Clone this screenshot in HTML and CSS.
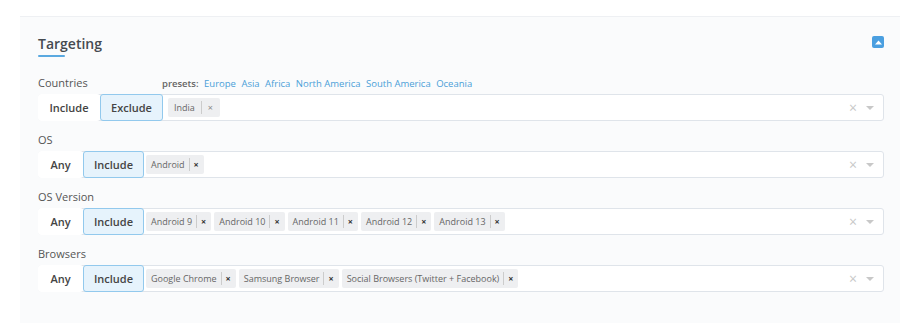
FILE: index.html
```html
<!DOCTYPE html>
<html lang="en">
<head>
  <meta charset="UTF-8" />
  <title>Targeting</title>
  <link rel="stylesheet" href="styles.css">
</head>
<body>
  <div class="panel">
    <div class="panel-head">
      <h2 class="title">Targeting</h2>
      <button class="collapse" title="Collapse">
        <svg width="7" height="5" viewBox="0 0 7 5"><path d="M0 4.5 L3.5 0.5 L7 4.5 Z" fill="#fff"/></svg>
      </button>
    </div>

    <div class="field">
      <div class="label-row">
        <span class="label label-wide">Countries</span>
        <span class="presets">presets:
          <a>Europe</a> <a>Asia</a> <a>Africa</a> <a>North America</a> <a>South America</a> <a>Oceania</a>
        </span>
      </div>
      <div class="select">
        <button class="mode w61">Include</button>
        <button class="mode w63 active">Exclude</button>
        <div class="tags">
          <span class="tag light">India<i>×</i></span>
        </div>
        <span class="clear">×</span>
        <span class="caret"></span>
      </div>
    </div>

    <div class="field">
      <div class="label">OS</div>
      <div class="select">
        <button class="mode w44">Any</button>
        <button class="mode w61 active">Include</button>
        <div class="tags">
          <span class="tag">Android<i>×</i></span>
        </div>
        <span class="clear">×</span>
        <span class="caret"></span>
      </div>
    </div>

    <div class="field">
      <div class="label">OS Version</div>
      <div class="select">
        <button class="mode w44">Any</button>
        <button class="mode w61 active">Include</button>
        <div class="tags">
          <span class="tag">Android 9<i>×</i></span>
          <span class="tag">Android 10<i>×</i></span>
          <span class="tag">Android 11<i>×</i></span>
          <span class="tag">Android 12<i>×</i></span>
          <span class="tag">Android 13<i>×</i></span>
        </div>
        <span class="clear">×</span>
        <span class="caret"></span>
      </div>
    </div>

    <div class="field">
      <div class="label">Browsers</div>
      <div class="select">
        <button class="mode w44">Any</button>
        <button class="mode w61 active">Include</button>
        <div class="tags">
          <span class="tag">Google Chrome<i>×</i></span>
          <span class="tag">Samsung Browser<i>×</i></span>
          <span class="tag">Social Browsers (Twitter + Facebook)<i>×</i></span>
        </div>
        <span class="clear">×</span>
        <span class="caret"></span>
      </div>
    </div>
  </div>
</body>
</html>
```

FILE: styles.css
```css
body {
  margin: 0;
  background: #ffffff;
  font-family: 'Open Sans', 'Liberation Sans', sans-serif;
  color: #555;
}

.panel {
  margin: 16px 0 0 20px;
  background: #fafbfc;
  border-top: 1px solid #eef0f3;
  padding: 17px 16px 30px 18px;
}

.panel-head {
  display: flex;
  align-items: center;
  justify-content: space-between;
  margin-bottom: 21px;
}

.title {
  position: relative;
  margin: 0;
  font-size: 14px;
  font-weight: 600;
  line-height: 20px;
  color: #454a50;
}

.title::after {
  content: '';
  position: absolute;
  left: 0;
  bottom: -3px;
  width: 27px;
  height: 2px;
  background: #5aa9e0;
  border-radius: 1px;
}

.collapse {
  display: flex;
  align-items: center;
  justify-content: center;
  width: 12px;
  height: 12px;
  padding: 0;
  border: none;
  border-radius: 2px;
  background: #4a9fe0;
  margin-top: -4px;
}

.field {
  margin-bottom: 11px;
}

.label-row {
  display: flex;
  align-items: baseline;
}

.label {
  font-size: 11px;
  line-height: 16px;
  color: #555;
  margin-bottom: 3px;
}

.label-wide {
  width: 124px;
}

.presets {
  font-size: 9.5px;
  font-weight: 600;
  color: #666;
}

.presets a {
  color: #4a9fd8;
  font-weight: 400;
  margin-left: 3px;
}

.select {
  display: flex;
  align-items: center;
  height: 27px;
  box-sizing: border-box;
  border: 1px solid #dfe4ea;
  border-radius: 3px;
  background: #fff;
}

.mode {
  align-self: stretch;
  box-sizing: border-box;
  margin: -1px 0;
  padding: 0;
  text-align: center;
  font-family: inherit;
  font-size: 11px;
  font-weight: 600;
  color: #444;
  background: #fff;
  border: 1px solid transparent;
  border-radius: 3px;
}

.mode:first-child {
  margin-left: -1px;
}

.w44 { width: 45px; }
.w61 { width: 62px; }
.w63 { width: 63px; }
.active.w61 { width: 61px; }

.mode.active {
  background: #e6f3fc;
  border-color: #92c9ed;
  color: #454545;
}

.tags {
  flex: 1;
  display: flex;
  gap: 3px;
  padding-left: 2px;
}

.select .w63 + .tags {
  padding-left: 5px;
}

.tag {
  display: inline-flex;
  align-items: center;
  height: 19px;
  padding: 0 5px;
  background: #eeeff1;
  border-radius: 2px;
  font-size: 9px;
  color: #666;
}

.tag i {
  font-style: normal;
  font-weight: 700;
  color: #333;
  border-left: 1px solid #ccc;
  margin-left: 4px;
  padding-left: 4px;
  line-height: 13px;
}

.tag.light {
  padding: 0 7px 0 6px;
}

.tag.light i {
  font-weight: 400;
  color: #888;
  margin-left: 6px;
  padding-left: 6px;
}

.clear {
  color: #c8c8c8;
  font-size: 14px;
  margin-right: 9px;
}

.caret {
  width: 0;
  height: 0;
  border-left: 4px solid transparent;
  border-right: 4px solid transparent;
  border-top: 4px solid #c8c8c8;
  margin-right: 9px;
}
```
